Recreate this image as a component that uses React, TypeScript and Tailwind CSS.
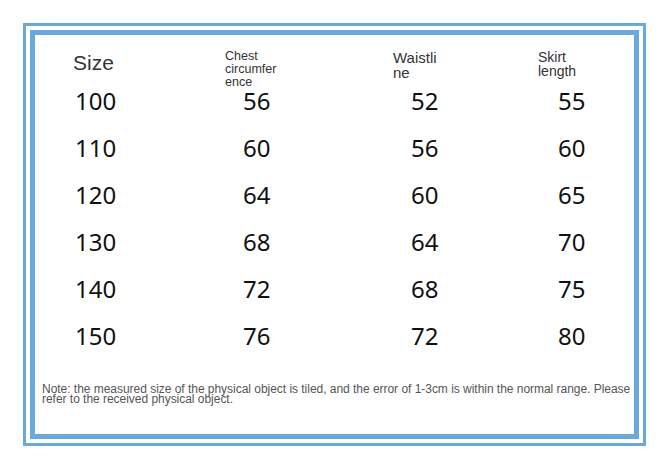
import React from "react";

const rows = [
  ["100", "56", "52", "55"],
  ["110", "60", "56", "60"],
  ["120", "64", "60", "65"],
  ["130", "68", "64", "70"],
  ["140", "72", "68", "75"],
  ["150", "76", "72", "80"],
];

export default function App() {
  return (
    <div className="w-[670px] h-[470px] bg-white pt-[23px] pl-[23px]" style={{ fontFamily: '"Liberation Sans", Arial, sans-serif' }}>
      <div className="w-[623px] h-[423px] border-[3px] border-[#6aa9dc] p-[4px]">
        <div className="w-full h-full border-[5px] border-[#6aa9dc] pt-[14px] flex flex-col">
          <div className="grid grid-cols-[152px_168px_145px_1fr] pl-[38px] h-[28px] text-[#333]">
            <div className="text-[21px] leading-[24px] mt-[2px]">Size</div>
            <div className="text-[12.5px] leading-[13px] mt-[1px]">
              <div>Chest</div>
              <div>circumfer</div>
              <div>ence</div>
            </div>
            <div className="text-[15px] leading-[15px] mt-[1px]">
              <div>Waistli</div>
              <div>ne</div>
            </div>
            <div className="text-[14px] leading-[14px] mt-[1px]">
              <div>Skirt</div>
              <div>length</div>
            </div>
          </div>
          {rows.map((r) => (
            <div
              key={r[0]}
              className="grid grid-cols-[152px_168px_145px_1fr] pl-[38px] h-[47px] items-center text-[24px] text-[#111]"
              style={{ fontFamily: '"Noto Sans", "Open Sans", sans-serif' }}
            >
              <div className="pl-[2px]">{r[0]}</div>
              <div className="pl-[18px]">{r[1]}</div>
              <div className="pl-[18px]">{r[2]}</div>
              <div className="pl-[20px]">{r[3]}</div>
            </div>
          ))}
          <div className="mt-[25px] pl-[7px] pr-0 text-[12px] leading-[10px] tracking-[-0.03px] text-[#555]">
            Note: the measured size of the physical object is tiled, and the error of 1-3cm is within the normal range. Please refer to the received physical object.
          </div>
        </div>
      </div>
    </div>
  );
}
